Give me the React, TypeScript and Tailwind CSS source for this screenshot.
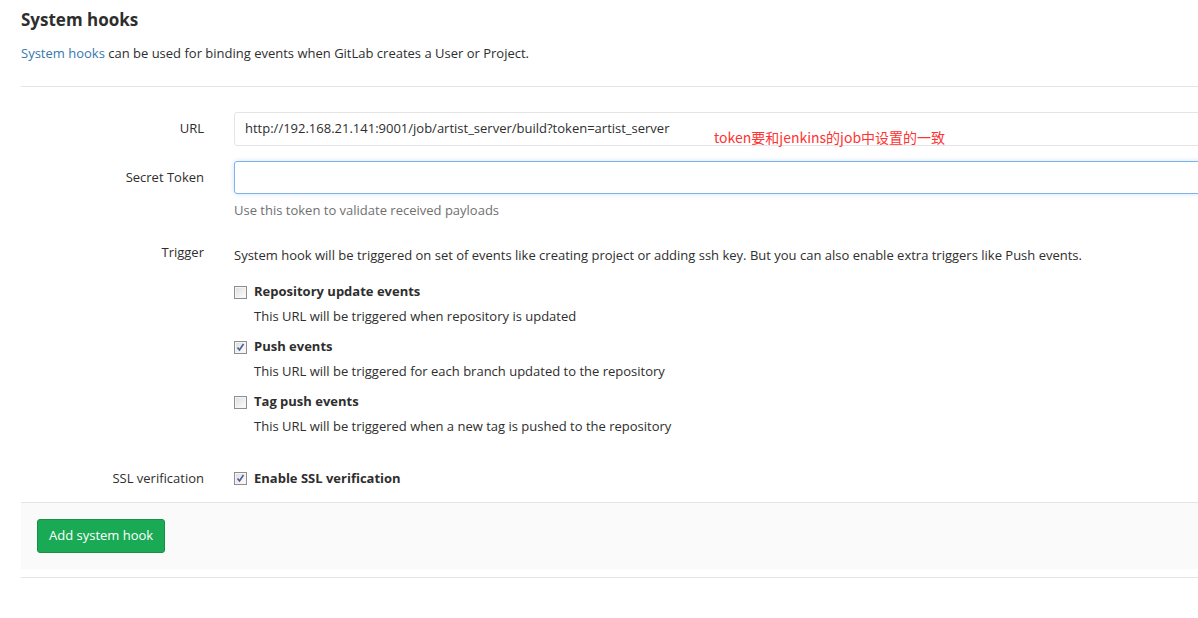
import React from 'react';

const font = { fontFamily: '"Open Sans", "Noto Sans CJK SC", sans-serif' };

const Check: React.FC<{ checked?: boolean }> = ({ checked }) => (
    <span className="inline-flex w-[13px] h-[13px] shrink-0 items-center justify-center border border-[#8e8f8f] bg-gradient-to-br from-[#dcdcdc] to-[#ffffff] shadow-[inset_0_0_0_1px_#f4f4f4]">
        {checked && (
            <svg width="9" height="9" viewBox="0 0 9 9">
                <path d="M1.5 4.5 L3.5 7 L7.5 1" fill="none" stroke="#4a5f97" strokeWidth="1.6" />
            </svg>
        )}
    </span>
);

const Row: React.FC<{ label: string; children: React.ReactNode; className?: string }> = ({ label, children, className }) => (
    <div className={`flex ${className ?? ''}`}>
        <div className="w-[183px] shrink-0 text-right text-[13px] text-[#2e2e2e]">{label}</div>
        <div className="ml-[30px] flex-1">{children}</div>
    </div>
);

const Event: React.FC<{ title: string; desc: string; checked?: boolean }> = ({ title, desc, checked }) => (
    <div>
        <div className="flex items-center gap-[7px] h-[20px]">
            <Check checked={checked} />
            <span className="text-[13px] font-bold text-[#2e2e2e]">{title}</span>
        </div>
        <div className="ml-[20px] mt-[5px] text-[13px] text-[#2e2e2e]">{desc}</div>
    </div>
);

const App: React.FC = () => {
    return (
        <div className="w-[1198px] h-[618px] overflow-hidden bg-white" style={font}>
            <div className="w-[1240px] pl-[21px] relative">
                <h3 className="pt-[9px] text-[17px] font-bold text-[#2e2e2e] leading-[22px]">System hooks</h3>
                <p className="mt-[12px] text-[13px] text-[#2e2e2e] leading-[20px]">
                    <span className="text-[#3777b0]">System hooks</span> can be used for binding events when GitLab creates a User or Project.
                </p>
                <div className="mt-[23px] border-t border-[#e5e5e5]" />

                <Row label="URL" className="mt-[25px] items-center">
                    <div className="h-[34px] border border-[#e5e5e5] rounded-[3px] flex items-center px-[10px] text-[13px] text-[#2e2e2e]">
                        http://192.168.21.141:9001/job/artist_server/build?token=artist_server
                    </div>
                </Row>

                <Row label="Secret Token" className="mt-[15px] items-center">
                    <div className="h-[33px] border border-[#7eb3ea] rounded-[3px] shadow-[0_0_5px_#cfe3f7]" />
                </Row>
                <Row label="" className="mt-[7px]">
                    <div className="text-[13px] text-[#707070]">Use this token to validate received payloads</div>
                </Row>

                <Row label="Trigger" className="mt-[22px]">
                    <div className="pt-[3px] text-[13px] text-[#2e2e2e]">
                        System hook will be triggered on set of events like creating project or adding ssh key. But you can also enable extra triggers like Push events.
                    </div>
                    <div className="mt-[17px] flex flex-col gap-[10.5px]">
                        <Event title="Repository update events" desc="This URL will be triggered when repository is updated" />
                        <Event checked title="Push events" desc="This URL will be triggered for each branch updated to the repository" />
                        <Event title="Tag push events" desc="This URL will be triggered when a new tag is pushed to the repository" />
                    </div>
                </Row>

                <Row label="SSL verification" className="mt-[32px] items-center">
                    <div className="flex items-center gap-[7px]">
                        <Check checked />
                        <span className="text-[13px] font-bold text-[#2e2e2e]">Enable SSL verification</span>
                    </div>
                </Row>

                <div className="mt-[14px] h-[67px] border-t border-[#e5e5e5] bg-[#fafafa] pl-[16px] pt-[16px]">
                    <button className="h-[34px] px-[11px] rounded-[3px] border border-[#168f48] bg-[#1aaa55] text-white text-[13px]">
                        Add system hook
                    </button>
                </div>
                <div className="mt-[8px] border-t border-[#e5e5e5]" />

                <span className="absolute left-[714px] top-[127px] text-[14px] text-[#ff3333]" style={{ fontFamily: '"Noto Sans CJK SC", sans-serif' }}>
                    token要和jenkins的job中设置的一致
                </span>
            </div>
        </div>
    );
};

export default App;
